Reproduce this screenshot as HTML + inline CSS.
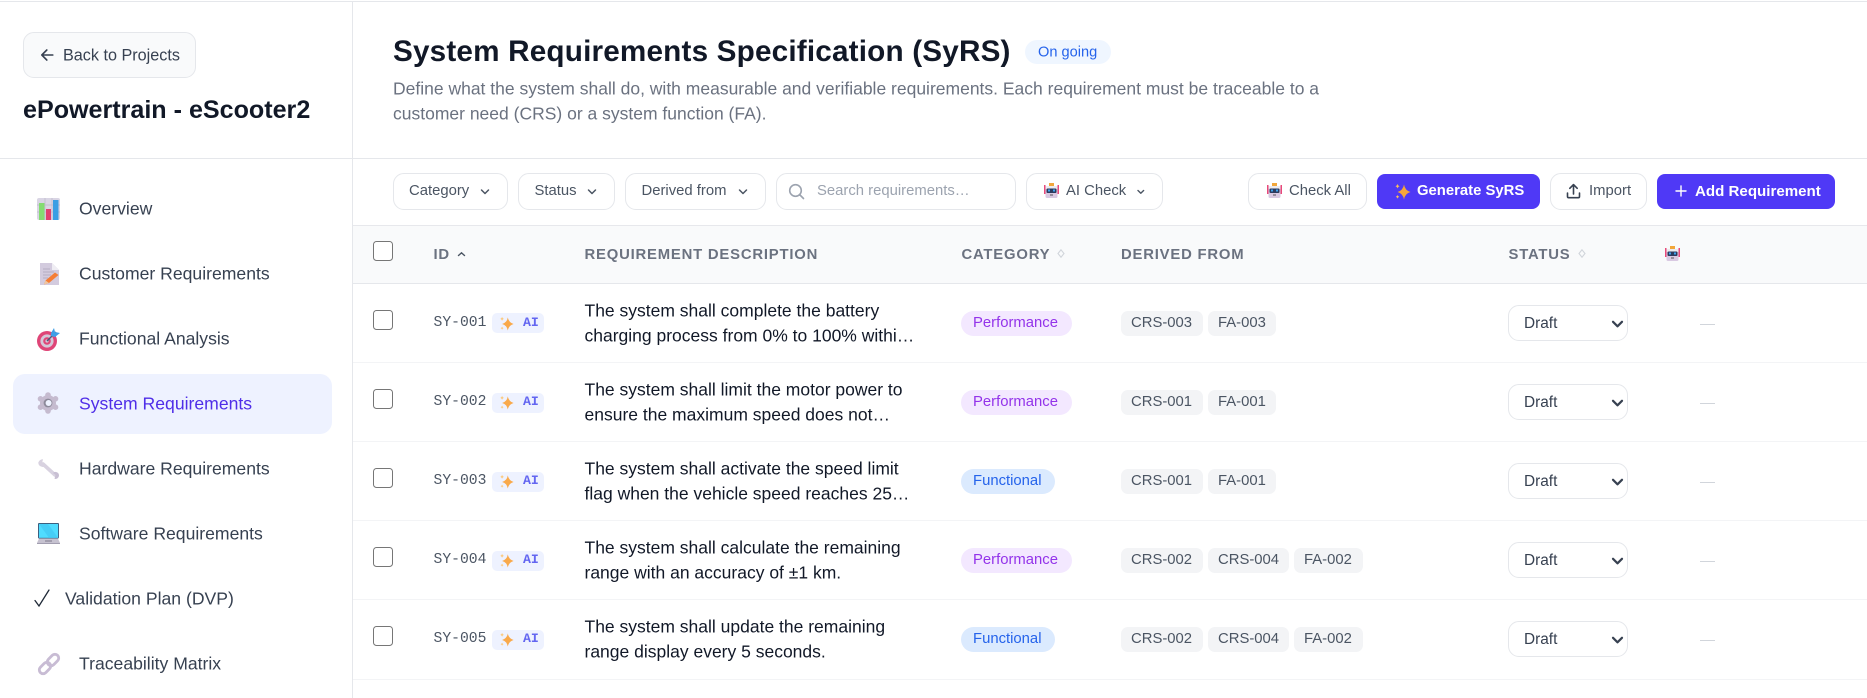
<!DOCTYPE html>
<html lang="en"><head><meta charset="utf-8"><title>SyRS</title>
<style>
*{box-sizing:border-box}
html,body{margin:0;padding:0;background:#fff}
body{position:relative;width:1867px;height:698px;overflow:hidden;font-family:"Liberation Sans",Arial,sans-serif;color:#111827}
.a{position:absolute;white-space:nowrap}
.t{position:absolute;white-space:nowrap;transform:translateY(-50%);line-height:1.2}
.line{position:absolute;background:#e5e7eb}
.nav{font-size:17.6px;color:#374151;left:79px;margin-top:1px}
.btn{position:absolute;top:173px;height:37px;border:1.5px solid #e5e7eb;border-radius:11px;background:#fff}
.bt{font-size:14.85px;color:#4b5563;top:192px}
.pb{position:absolute;top:174px;height:35px;border-radius:8px;background:#4f39f6}
.pt{font-size:14.85px;font-weight:700;color:#fff;top:192px}
.th{font-size:14.85px;font-weight:700;color:#6b7280;letter-spacing:.8px;top:256px}
.cb{position:absolute;left:373px;width:20px;height:20px;border:1.5px solid #767676;border-radius:3.5px;background:#fff}
.id{font-family:"Liberation Mono",monospace;font-size:14.7px;color:#4b5563;left:433.5px;margin-top:1px}
.ai{position:absolute;left:492px;width:52px;height:20px;background:#eef2ff;border-radius:5px}
.ait{font-family:"Liberation Mono",monospace;font-weight:700;font-size:13.2px;color:#6366f1;left:523px}
.d{font-size:17.5px;color:#111827;left:584.5px}
.d2{margin-top:.6px}
.pill{position:absolute;left:961px;height:25px;border-radius:13px}
.pf{background:#f3e8ff;width:111px}.fn{background:#dbeafe;width:94px}
.pl{font-size:14.85px;left:973px;margin-top:1px}
.chip{position:absolute;height:25px;border-radius:7px;background:#f3f4f6}
.cl{font-size:14.85px;color:#4b5563;margin-top:1px}
select{position:absolute;left:1508px;width:120px;height:36px;border:1.5px solid #e5e7eb;border-radius:11px;background:#fff;font:15.4px "Liberation Sans",Arial,sans-serif;color:#374151;padding:0 8px 0 15px;appearance:none;-webkit-appearance:none}
.dash{position:absolute;left:1700px;width:15px;height:1px;background:#d1d5db}
svg{position:absolute;overflow:visible}
.chev{position:absolute;left:1611px}
</style></head><body>

<div class="line" style="left:0;top:1px;width:1867px;height:1px"></div>
<div class="line" style="left:352px;top:2px;width:1px;height:696px"></div>
<div class="line" style="left:0;top:158px;width:1867px;height:1px"></div>

<!-- sidebar -->
<div class="a" style="left:23px;top:32px;width:173px;height:46px;border:1.5px solid #e5e7eb;border-radius:11px;background:#f9fafb"></div>
<svg style="left:40px;top:47px" width="16" height="16" viewBox="0 0 16 16" fill="none" stroke="#374151" stroke-width="1.6" stroke-linecap="round" stroke-linejoin="round"><path d="M12.800 8H1.800M6.800 3 1.800 8l5 5"/></svg>
<div class="t" style="left:63px;top:56px;font-size:16.2px;color:#374151">Back to Projects</div>
<div class="t" style="left:23px;top:110px;font-size:25.1px;font-weight:700;color:#111827">ePowertrain - eScooter2</div>

<div class="a" style="left:13px;top:374px;width:319px;height:60px;background:#eef2ff;border-radius:12px"></div>

<!-- overview icon -->
<svg style="left:37px;top:198px" width="23" height="22" viewBox="0 0 23 22"><rect width="23" height="22" rx="2" fill="#d9d5e4"/><path d="M0 7h23M0 14h23M8 0v22M15 0v22" stroke="#bdb8ca" stroke-width=".7"/><rect x="2" y="5" width="5.500" height="17" fill="#84dc72"/><rect x="9" y="11" width="5" height="11" fill="#e2406f"/><rect x="16" y="2" width="5.500" height="20" fill="#3a9ee4"/></svg>
<div class="t nav" style="top:208px">Overview</div>
<!-- doc icon -->
<svg style="left:40px;top:263px" width="19" height="22" viewBox="0 0 19 22"><path d="M0 0h12l7 7v15H0z" fill="#d3cbde"/><path d="M12 0v7h7z" fill="#efedf3"/><path d="M3 6h7M3 9h11M3 12h8M3 15h5" stroke="#b6aec3" stroke-width="1"/><path d="M4 21.500l1.500-4L15 9.500l3.500 2.500-9.500 8z" fill="#f57d35"/><path d="M4 21.500l1.500-4 3.500 2.500z" fill="#f0c7a0"/></svg>
<div class="t nav" style="top:273px">Customer Requirements</div>
<!-- target icon -->
<svg style="left:37px;top:328px" width="23" height="23" viewBox="0 0 23 23"><circle cx="10" cy="13" r="10" fill="#df4577"/><circle cx="10" cy="13" r="6.600" fill="#d4c8d8"/><circle cx="10" cy="13" r="3.800" fill="#df4577"/><circle cx="10" cy="13" r="1.600" fill="#d4c8d8"/><path d="M10 13 19 4" stroke="#4a5a78" stroke-width="1.400"/><path d="M14 5l3-5 1 4 5 1-5 4-4-1z" fill="#3f9fe6"/></svg>
<div class="t nav" style="top:338px">Functional Analysis</div>
<!-- gear icon -->
<svg style="left:37px;top:392px" width="22" height="22" viewBox="0 0 22 22"><g fill="#c5bbcf"><circle cx="11" cy="11" r="8"/><circle cx="11" cy="3" r="2.800"/><circle cx="11" cy="19" r="2.800"/><circle cx="3.500" cy="6.800" r="2.800"/><circle cx="18.500" cy="6.800" r="2.800"/><circle cx="3.500" cy="15.200" r="2.800"/><circle cx="18.500" cy="15.200" r="2.800"/></g><circle cx="11" cy="11" r="4.400" fill="#8d8a9a"/><circle cx="11.600" cy="11" r="3" fill="#eef2ff"/></svg>
<div class="t nav" style="top:403px;color:#4f2ee8">System Requirements</div>
<!-- wrench icon -->
<svg style="left:38px;top:459px" width="21" height="20" viewBox="0 0 21 20"><path d="M5 5 17 16" stroke="#d8d2e0" stroke-width="3.600" stroke-linecap="round"/><path d="M.3 3.500a4.500 4.500 0 0 0 7 3.700L7 7l-3-2.500L5 .3A4.500 4.500 0 0 0 .3 3.500z" fill="#d8d2e0"/><path d="M21 16.500a3.500 3.500 0 0 0-6-2.500l2.500 2-1 3.800a3.500 3.500 0 0 0 4.500-3.300z" fill="#c8bfd3"/></svg>
<div class="t nav" style="top:468px">Hardware Requirements</div>
<!-- laptop icon -->
<svg style="left:37px;top:523px" width="23" height="21" viewBox="0 0 23 21"><rect x="1" y="0" width="21" height="15.500" rx="1" fill="#3d6080"/><rect x="2" y="1" width="19" height="13.800" fill="#4fdcff"/><path d="M2 1h9l10 13.800h-9z" fill="#45cdf6"/><path d="M2 15.500h19l2 4.500H0z" fill="#c6c2d0"/><path d="M0 20h23v1H0z" fill="#a29eb0"/><path d="M8 18h7" stroke="#8a8698" stroke-width="1.200"/></svg>
<div class="t nav" style="top:533px">Software Requirements</div>
<svg style="left:34px;top:589px" width="16" height="18" viewBox="0 0 16 18" fill="none" stroke="#1f2937" stroke-width="1.300" stroke-linecap="round"><path d="M1 11.500 5 17 15 1"/></svg>
<div class="t nav" style="top:598px;left:65px">Validation Plan (DVP)</div>
<!-- link icon -->
<svg style="left:38px;top:653px" width="22" height="22" viewBox="0 0 22 22" fill="none" stroke="#c8bcd4" stroke-width="2.800"><rect x="-6.500" y="-3.800" width="13" height="7.600" rx="3.800" transform="translate(7 15) rotate(-45)"/><rect x="-6.500" y="-3.800" width="13" height="7.600" rx="3.800" transform="translate(15 7) rotate(-45)"/></svg>
<div class="t nav" style="top:663px">Traceability Matrix</div>

<!-- page head -->
<div class="t" style="left:393px;top:52px;font-size:29.7px;font-weight:700;color:#111827;letter-spacing:.18px">System Requirements Specification (SyRS)</div>
<div class="a" style="left:1025px;top:40px;width:86px;height:24px;border-radius:12px;background:#eff6ff"></div>
<div class="t" style="left:1038px;top:53px;font-size:14.6px;color:#2563eb">On going</div>
<div class="t" style="left:393px;top:88.500px;font-size:17.5px;color:#6b7280">Define what the system shall do, with measurable and verifiable requirements. Each requirement must be traceable to a</div>
<div class="t" style="left:393px;top:113.500px;font-size:17.5px;color:#6b7280">customer need (CRS) or a system function (FA).</div>

<!-- toolbar -->
<div class="a" style="left:353px;top:225px;width:1514px;height:1px;background:#e7e8ec"></div>
<div class="btn" style="left:393px;width:115px"></div>
<div class="t bt" style="left:409px">Category</div>
<svg style="left:478.500px;top:188px" width="12" height="8" viewBox="0 0 12 8" fill="none" stroke="#4b5563" stroke-width="1.500" stroke-linecap="round" stroke-linejoin="round"><path d="M2.500 2 6 5.500 9.500 2"/></svg>
<div class="btn" style="left:518px;width:97px"></div>
<div class="t bt" style="left:534.500px">Status</div>
<svg style="left:585.500px;top:188px" width="12" height="8" viewBox="0 0 12 8" fill="none" stroke="#4b5563" stroke-width="1.500" stroke-linecap="round" stroke-linejoin="round"><path d="M2.500 2 6 5.500 9.500 2"/></svg>
<div class="btn" style="left:625px;width:141px"></div>
<div class="t bt" style="left:641.500px">Derived from</div>
<svg style="left:736.500px;top:188px" width="12" height="8" viewBox="0 0 12 8" fill="none" stroke="#4b5563" stroke-width="1.500" stroke-linecap="round" stroke-linejoin="round"><path d="M2.500 2 6 5.500 9.500 2"/></svg>
<div class="btn" style="left:776px;width:240px"></div>
<svg style="left:788px;top:183px" width="17" height="17" viewBox="0 0 17 17" fill="none" stroke="#9ca3af" stroke-width="1.600" stroke-linecap="round"><circle cx="7.500" cy="7.500" r="5.800"/><path d="M12 12l3.500 3.500"/></svg>
<div class="t bt" style="left:817px;color:#9ca3af">Search requirements…</div>
<div class="btn" style="left:1026px;width:137px"></div>
<svg style="left:1044px;top:183px" width="15" height="15" viewBox="0 0 15 15"><rect x="0" y="2" width="1.500" height="9" fill="#e8497a"/><rect x="13.500" y="2" width="1.500" height="9" fill="#e8497a"/><rect x="1.500" y="3" width="12" height="12" rx="1.500" fill="#d9c9e2"/><rect x="1.500" y="3" width="12" height="3" fill="#ecebf0"/><rect x="5" y="0" width="5" height="3" fill="#f2a73b"/><rect x="2.500" y="5.500" width="10" height="4.500" rx="1" fill="#2b3a5e"/><rect x="4" y="6.500" width="2" height="2" fill="#3fa4ee"/><rect x="9" y="6.500" width="2" height="2" fill="#3fa4ee"/><rect x="6" y="11.500" width="3" height="1" fill="#555"/></svg>
<div class="t bt" style="left:1066px">AI Check</div>
<svg style="left:1135px;top:188px" width="12" height="8" viewBox="0 0 12 8" fill="none" stroke="#4b5563" stroke-width="1.400" stroke-linecap="round" stroke-linejoin="round"><path d="M3 2.500 5.800 5.200 8.600 2.500"/></svg>

<div class="btn" style="left:1248px;width:119px"></div>
<svg style="left:1267px;top:183px" width="15" height="15" viewBox="0 0 15 15"><rect x="0" y="2" width="1.500" height="9" fill="#e8497a"/><rect x="13.500" y="2" width="1.500" height="9" fill="#e8497a"/><rect x="1.500" y="3" width="12" height="12" rx="1.500" fill="#d9c9e2"/><rect x="1.500" y="3" width="12" height="3" fill="#ecebf0"/><rect x="5" y="0" width="5" height="3" fill="#f2a73b"/><rect x="2.500" y="5.500" width="10" height="4.500" rx="1" fill="#2b3a5e"/><rect x="4" y="6.500" width="2" height="2" fill="#3fa4ee"/><rect x="9" y="6.500" width="2" height="2" fill="#3fa4ee"/><rect x="6" y="11.500" width="3" height="1" fill="#555"/></svg>
<div class="t bt" style="left:1289px">Check All</div>

<div class="pb" style="left:1377px;width:163px"></div>
<svg style="left:1394px;top:182.500px" width="17" height="17" viewBox="0 0 17 17"><path d="M10 1.500q1 6 6.500 7.500-5.500 1.500-6.500 7.500-1-6-6.500-7.500 5.500-1.500 6.500-7.500z" fill="#f5a63b"/><path d="M3.500 1q.4 1.700 2 2.200-1.600.5-2 2.200-.4-1.700-2-2.200 1.600-.5 2-2.200zM3.500 12q.3 1.300 1.700 1.800-1.400.5-1.700 1.800-.3-1.300-1.700-1.800 1.400-.5 1.700-1.800z" fill="#f7c05c"/></svg>
<div class="t pt" style="left:1417px">Generate SyRS</div>

<div class="btn" style="left:1550px;width:97px"></div>
<svg style="left:1566px;top:183px" width="15" height="16" viewBox="0 0 15 16" fill="none" stroke="#374151" stroke-width="1.600" stroke-linecap="round" stroke-linejoin="round"><path d="M1.500 10v3.500c0 .8.500 1.200 1.200 1.200h9.600c.7 0 1.200-.4 1.200-1.200V10M7.500 11V2M3.800 5.300 7.500 1.600l3.700 3.700"/></svg>
<div class="t bt" style="left:1589px">Import</div>

<div class="pb" style="left:1657px;width:178px"></div>
<svg style="left:1674px;top:184px" width="14" height="14" viewBox="0 0 14 14" stroke="#fff" stroke-width="1.400" stroke-linecap="round"><path d="M7 2v10M2 7h10"/></svg>
<div class="t pt" style="left:1695px;font-size:15.1px">Add Requirement</div>

<!-- table head -->
<div class="a" style="left:353px;top:226px;width:1514px;height:57px;background:#f9fafb"></div>
<div class="line" style="left:353px;top:283px;width:1514px;height:1px"></div>
<div class="cb" style="top:241px"></div>
<div class="t th" style="left:433.500px">ID</div>
<svg style="left:457px;top:251px" width="9" height="6" viewBox="0 0 9 6" fill="none" stroke="#4b5563" stroke-width="1.400" stroke-linecap="round"><path d="M1.500 4.500 4.500 1.800l3 2.700"/></svg>
<div class="t th" style="left:584.500px">REQUIREMENT DESCRIPTION</div>
<div class="t th" style="left:961.500px">CATEGORY</div>
<svg style="left:1057px;top:249px" width="8" height="9" viewBox="0 0 8 9" fill="none" stroke="#d1d5db" stroke-width="1.100"><path d="M4 .800 7 4.500 4 8.200 1 4.500z"/></svg>
<div class="t th" style="left:1121px">DERIVED FROM</div>
<div class="t th" style="left:1508.500px">STATUS</div>
<svg style="left:1578px;top:249px" width="8" height="9" viewBox="0 0 8 9" fill="none" stroke="#d1d5db" stroke-width="1.100"><path d="M4 .800 7 4.500 4 8.200 1 4.500z"/></svg>
<svg style="left:1665px;top:246px" width="15" height="15" viewBox="0 0 15 15"><rect x="0" y="2" width="1.500" height="9" fill="#e8497a"/><rect x="13.500" y="2" width="1.500" height="9" fill="#e8497a"/><rect x="1.500" y="3" width="12" height="12" rx="1.500" fill="#d9c9e2"/><rect x="1.500" y="3" width="12" height="3" fill="#ecebf0"/><rect x="5" y="0" width="5" height="3" fill="#f2a73b"/><rect x="2.500" y="5.500" width="10" height="4.500" rx="1" fill="#2b3a5e"/><rect x="4" y="6.500" width="2" height="2" fill="#3fa4ee"/><rect x="9" y="6.500" width="2" height="2" fill="#3fa4ee"/><rect x="6" y="11.500" width="3" height="1" fill="#555"/></svg>

<!-- row 1 -->
<div class="cb" style="top:310px"></div>
<div class="t id" style="top:323px">SY-001</div>
<div class="ai" style="top:313px"></div>
<svg style="left:498.500px;top:315.500px" width="15" height="15" viewBox="0 0 17 17"><path d="M10 1.500q1 6 6.500 7.500-5.500 1.500-6.500 7.500-1-6-6.500-7.500 5.500-1.500 6.500-7.500z" fill="#f9a94a"/><path d="M3.500 1q.4 1.700 2 2.200-1.600.5-2 2.200-.4-1.700-2-2.200 1.600-.5 2-2.200zM3.500 12q.3 1.300 1.700 1.800-1.400.5-1.700 1.800-.3-1.300-1.700-1.800 1.400-.5 1.700-1.800z" fill="#fbc97e"/></svg>
<div class="t ait" style="top:323px">AI</div>
<div class="t d" style="top:311px">The system shall complete the battery</div>
<div class="t d d2" style="top:335px">charging process from 0% to 100% withi…</div>
<div class="pill pf" style="top:311px"></div><div class="t pl" style="top:323px;color:#9333ea">Performance</div>
<div class="chip" style="left:1121px;top:311px;width:82px"></div><div class="t cl" style="left:1131px;top:323px">CRS-003</div>
<div class="chip" style="left:1208px;top:311px;width:68px"></div><div class="t cl" style="left:1218px;top:323px">FA-003</div>
<select style="top:305px"><option>Draft</option></select>
<svg class="chev" style="top:320px" width="13" height="9" viewBox="0 0 13 9" fill="none" stroke="#374151" stroke-width="2.200" stroke-linecap="round" stroke-linejoin="round"><path d="M2 1.800l4.500 4.500L11 1.800"/></svg>
<div class="dash" style="top:324px"></div>
<div class="a" style="left:353px;top:362px;width:1514px;height:1px;background:#f3f4f6"></div>

<!-- row 2 -->
<div class="cb" style="top:389px"></div>
<div class="t id" style="top:402px">SY-002</div>
<div class="ai" style="top:393px"></div>
<svg style="left:498.500px;top:394.500px" width="15" height="15" viewBox="0 0 17 17"><path d="M10 1.500q1 6 6.500 7.500-5.500 1.500-6.500 7.500-1-6-6.500-7.500 5.500-1.500 6.500-7.500z" fill="#f9a94a"/><path d="M3.500 1q.4 1.700 2 2.200-1.600.5-2 2.200-.4-1.700-2-2.200 1.600-.5 2-2.200zM3.500 12q.3 1.300 1.700 1.800-1.400.5-1.700 1.800-.3-1.300-1.700-1.800 1.400-.5 1.700-1.800z" fill="#fbc97e"/></svg>
<div class="t ait" style="top:402px">AI</div>
<div class="t d" style="top:390px">The system shall limit the motor power to</div>
<div class="t d d2" style="top:414px">ensure the maximum speed does not…</div>
<div class="pill pf" style="top:390px"></div><div class="t pl" style="top:402px;color:#9333ea">Performance</div>
<div class="chip" style="left:1121px;top:390px;width:82px"></div><div class="t cl" style="left:1131px;top:402px">CRS-001</div>
<div class="chip" style="left:1208px;top:390px;width:68px"></div><div class="t cl" style="left:1218px;top:402px">FA-001</div>
<select style="top:384px"><option>Draft</option></select>
<svg class="chev" style="top:399px" width="13" height="9" viewBox="0 0 13 9" fill="none" stroke="#374151" stroke-width="2.200" stroke-linecap="round" stroke-linejoin="round"><path d="M2 1.800l4.500 4.500L11 1.800"/></svg>
<div class="dash" style="top:403px"></div>
<div class="a" style="left:353px;top:441px;width:1514px;height:1px;background:#f3f4f6"></div>

<!-- row 3 -->
<div class="cb" style="top:468px"></div>
<div class="t id" style="top:481px">SY-003</div>
<div class="ai" style="top:472px"></div>
<svg style="left:498.500px;top:473.500px" width="15" height="15" viewBox="0 0 17 17"><path d="M10 1.500q1 6 6.500 7.500-5.500 1.500-6.500 7.500-1-6-6.500-7.500 5.500-1.500 6.500-7.500z" fill="#f9a94a"/><path d="M3.500 1q.4 1.700 2 2.200-1.600.5-2 2.200-.4-1.700-2-2.200 1.600-.5 2-2.200zM3.500 12q.3 1.300 1.700 1.800-1.400.5-1.700 1.800-.3-1.300-1.700-1.800 1.400-.5 1.700-1.800z" fill="#fbc97e"/></svg>
<div class="t ait" style="top:481px">AI</div>
<div class="t d" style="top:469px">The system shall activate the speed limit</div>
<div class="t d d2" style="top:493px">flag when the vehicle speed reaches 25…</div>
<div class="pill fn" style="top:469px"></div><div class="t pl" style="top:481px;color:#2563eb">Functional</div>
<div class="chip" style="left:1121px;top:469px;width:82px"></div><div class="t cl" style="left:1131px;top:481px">CRS-001</div>
<div class="chip" style="left:1208px;top:469px;width:68px"></div><div class="t cl" style="left:1218px;top:481px">FA-001</div>
<select style="top:463px"><option>Draft</option></select>
<svg class="chev" style="top:478px" width="13" height="9" viewBox="0 0 13 9" fill="none" stroke="#374151" stroke-width="2.200" stroke-linecap="round" stroke-linejoin="round"><path d="M2 1.800l4.500 4.500L11 1.800"/></svg>
<div class="dash" style="top:482px"></div>
<div class="a" style="left:353px;top:520px;width:1514px;height:1px;background:#f3f4f6"></div>

<!-- row 4 -->
<div class="cb" style="top:547px"></div>
<div class="t id" style="top:560px">SY-004</div>
<div class="ai" style="top:551px"></div>
<svg style="left:498.500px;top:552.500px" width="15" height="15" viewBox="0 0 17 17"><path d="M10 1.500q1 6 6.500 7.500-5.500 1.500-6.500 7.500-1-6-6.500-7.500 5.500-1.500 6.500-7.500z" fill="#f9a94a"/><path d="M3.500 1q.4 1.700 2 2.200-1.600.5-2 2.200-.4-1.700-2-2.200 1.600-.5 2-2.200zM3.500 12q.3 1.300 1.700 1.800-1.400.5-1.700 1.800-.3-1.300-1.700-1.800 1.400-.5 1.700-1.800z" fill="#fbc97e"/></svg>
<div class="t ait" style="top:560px">AI</div>
<div class="t d" style="top:548px">The system shall calculate the remaining</div>
<div class="t d d2" style="top:572px">range with an accuracy of ±1 km.</div>
<div class="pill pf" style="top:548px"></div><div class="t pl" style="top:560px;color:#9333ea">Performance</div>
<div class="chip" style="left:1121px;top:548px;width:82px"></div><div class="t cl" style="left:1131px;top:560px">CRS-002</div>
<div class="chip" style="left:1208px;top:548px;width:81px"></div><div class="t cl" style="left:1218px;top:560px">CRS-004</div>
<div class="chip" style="left:1294px;top:548px;width:69px"></div><div class="t cl" style="left:1304px;top:560px">FA-002</div>
<select style="top:542px"><option>Draft</option></select>
<svg class="chev" style="top:557px" width="13" height="9" viewBox="0 0 13 9" fill="none" stroke="#374151" stroke-width="2.200" stroke-linecap="round" stroke-linejoin="round"><path d="M2 1.800l4.500 4.500L11 1.800"/></svg>
<div class="dash" style="top:561px"></div>
<div class="a" style="left:353px;top:599px;width:1514px;height:1px;background:#f3f4f6"></div>

<!-- row 5 -->
<div class="cb" style="top:626px"></div>
<div class="t id" style="top:639px">SY-005</div>
<div class="ai" style="top:630px"></div>
<svg style="left:498.500px;top:631.500px" width="15" height="15" viewBox="0 0 17 17"><path d="M10 1.500q1 6 6.500 7.500-5.500 1.500-6.500 7.500-1-6-6.500-7.500 5.500-1.500 6.500-7.500z" fill="#f9a94a"/><path d="M3.500 1q.4 1.700 2 2.200-1.600.5-2 2.200-.4-1.700-2-2.200 1.600-.5 2-2.200zM3.500 12q.3 1.300 1.700 1.800-1.400.5-1.700 1.800-.3-1.300-1.700-1.800 1.400-.5 1.700-1.800z" fill="#fbc97e"/></svg>
<div class="t ait" style="top:639px">AI</div>
<div class="t d" style="top:627px">The system shall update the remaining</div>
<div class="t d" style="top:652px">range display every 5 seconds.</div>
<div class="pill fn" style="top:627px"></div><div class="t pl" style="top:639px;color:#2563eb">Functional</div>
<div class="chip" style="left:1121px;top:627px;width:82px"></div><div class="t cl" style="left:1131px;top:639px">CRS-002</div>
<div class="chip" style="left:1208px;top:627px;width:81px"></div><div class="t cl" style="left:1218px;top:639px">CRS-004</div>
<div class="chip" style="left:1294px;top:627px;width:69px"></div><div class="t cl" style="left:1304px;top:639px">FA-002</div>
<select style="top:621px"><option>Draft</option></select>
<svg class="chev" style="top:636px" width="13" height="9" viewBox="0 0 13 9" fill="none" stroke="#374151" stroke-width="2.200" stroke-linecap="round" stroke-linejoin="round"><path d="M2 1.800l4.500 4.500L11 1.800"/></svg>
<div class="dash" style="top:640px"></div>
<div class="a" style="left:353px;top:679px;width:1514px;height:1px;background:#f3f4f6"></div>

</body></html>
